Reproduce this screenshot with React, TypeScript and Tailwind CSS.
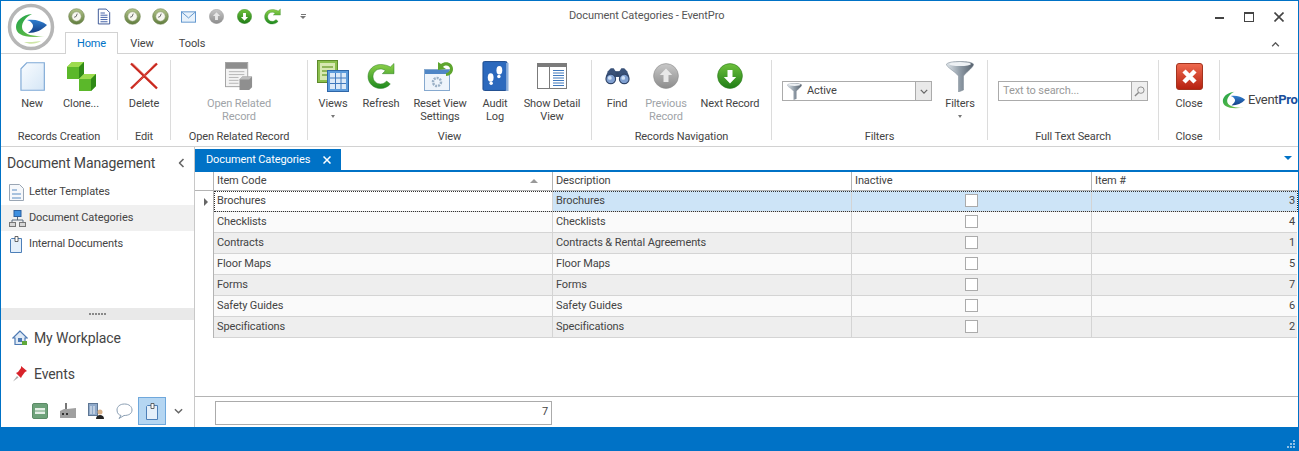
import type { ReactNode } from "react";

const Clock = () => (
  <svg viewBox="0 0 18 18" className="h-[17px] w-[17px]">
    <defs>
      <linearGradient id="clockRing" x1="0" y1="0" x2="0" y2="1">
        <stop offset="0" stopColor="#b4c58c" />
        <stop offset="1" stopColor="#5f7c3c" />
      </linearGradient>
    </defs>
    <circle cx="9" cy="9" r="8.300" fill="url(#clockRing)" stroke="#6d8250" strokeWidth=".6" />
    <circle cx="9" cy="9" r="5" fill="#f7f7f0" stroke="#8d9c72" strokeWidth=".6" />
    <path d="M9.800 6 8.600 9 6.500 9.800" fill="none" stroke="#555" strokeWidth=".9" />
  </svg>
);

const Sheet = () => (
  <svg viewBox="0 0 16 18" className="h-[17px] w-[14px]">
    <path d="M1.500.5h9l4 4v13h-13z" fill="#fff" stroke="#27468c" />
    <path d="M4 5h5M4 7.500h8M4 10h8M4 12.500h8M4 15h8" stroke="#2d4f9e" />
  </svg>
);

const Mail = () => (
  <svg viewBox="0 0 16 12" className="h-[12px] w-[15px]">
    <rect x=".5" y=".5" width="15" height="11" fill="#e8f2fb" stroke="#5c93cc" />
    <path d="M.5.5 8 7l7.500-6.500" fill="none" stroke="#5c93cc" />
  </svg>
);

const RoundArrow = ({ size, up, gray }: { size: number; up?: boolean; gray?: boolean }) => (
  <svg viewBox="0 0 26 26" style={{ width: size, height: size }}>
    <defs>
      <linearGradient id="greenBall" x1="0" y1="0" x2="0" y2="1">
        <stop offset="0" stopColor="#6ec13c" />
        <stop offset="1" stopColor="#1f7d16" />
      </linearGradient>
      <linearGradient id="grayBall" x1="0" y1="0" x2="0" y2="1">
        <stop offset="0" stopColor="#c8c8c8" />
        <stop offset="1" stopColor="#8c8c8c" />
      </linearGradient>
    </defs>
    <circle cx="13" cy="13" r="12.400" fill={gray ? "url(#grayBall)" : "url(#greenBall)"} stroke={gray ? "#8b8b8b" : "#2a7a1d"} strokeWidth=".6" />
    <path d={up ? "M13 5.500 6.800 12h3.700v7h5v-7h3.700z" : "M13 20.500 6.800 14h3.700V7h5v7h3.700z"} fill={gray ? "#e8e8e8" : "#fff"} />
  </svg>
);

const RefreshArrow = ({ size }: { size: number }) => (
  <svg viewBox="0 0 28 28" style={{ width: size, height: size }}>
    <defs>
      <linearGradient id="refreshGreen" x1="0" y1="0" x2="0" y2="1">
        <stop offset="0" stopColor="#8ed14a" />
        <stop offset="1" stopColor="#1d8a1e" />
      </linearGradient>
    </defs>
    <path
      d="M13.500 2.500C6.500 2.500 1 7.800 1 14.500S6.500 26.500 13.500 26.500c4 0 7.500-1.700 9.800-4.500l-3.700-3c-1.500 1.900-3.500 3-6.100 3-4.200 0-7.500-3.300-7.500-7.500s3.300-7.500 7.500-7.500c2 0 3.500.6 4.800 1.700l-3 3H27V1.500l-3.700 3.500C20.800 3.400 17.300 2.500 13.500 2.500z"
      fill="url(#refreshGreen)"
      stroke="#2b7d22"
      strokeWidth=".5"
    />
  </svg>
);

const NewPage = () => (
  <svg viewBox="0 0 26 30" className="h-[29px] w-[25px]">
    <defs>
      <linearGradient id="pageBlue" x1="0" y1="0" x2="1" y2="1">
        <stop offset="0" stopColor="#f9fcff" />
        <stop offset="1" stopColor="#d5e6f6" />
      </linearGradient>
    </defs>
    <path d="M7 .7h18.300v28.600H1V7z" fill="url(#pageBlue)" stroke="#7fa9d6" strokeWidth="1.200" />
  </svg>
);

const Cube = ({ x, y }: { x: number; y: number }) => (
  <g transform={`translate(${x} ${y})`}>
    <path d="M0 5 5 0h12v12l-5 5H0z" fill="#5bb82a" />
    <path d="M0 5 5 0h12l-5 5z" fill="#9ddb4e" />
    <path d="M12 5l5-5v12l-5 5z" fill="#2f8a16" />
  </g>
);

const Clone = () => (
  <svg viewBox="0 0 29 29" className="h-[29px] w-[29px]">
    <Cube x={0} y={0} />
    <Cube x={12} y={12} />
  </svg>
);

const RedX = () => (
  <svg viewBox="0 0 28 28" className="h-[28px] w-[28px]">
    <path d="M1 1.500 27 26.500M27 1.500 1 26.500" stroke="#c8281e" strokeWidth="2.400" />
    <path d="M3 1.500 27 25M25 1.500 3 26" stroke="#e9685e" strokeWidth=".6" />
  </svg>
);

const RelatedRecord = () => (
  <svg viewBox="0 0 30 30" className="h-[29px] w-[29px]">
    <rect x=".5" y=".5" width="23" height="25" fill="#f3f3f3" stroke="#a3a3a3" />
    <rect x="1" y="1" width="22" height="6" fill="#8e8e8e" />
    <path d="M4 10h16M4 13h16M4 16h10M4 19h10M4 22h10" stroke="#b5b5b5" />
    <path d="M15 18l3-3h10v11l-3 3H15z" fill="#8f8f8f" />
    <path d="M15 18l3-3h10l-3 3z" fill="#bdbdbd" />
  </svg>
);

const ViewsIcon = () => (
  <svg viewBox="0 0 32 32" className="h-[32px] w-[32px]">
    <rect x=".5" y=".5" width="20" height="22" fill="#8bbf4d" stroke="#5d8a2b" />
    <rect x="3" y="3" width="15" height="17" fill="#d7e8b2" />
    <path d="M5 7h11M5 11h11M5 15h8" stroke="#7aa53f" strokeWidth="1.500" />
    <rect x="10.500" y="10.500" width="21" height="21" fill="#5b9bdc" stroke="#2e66a8" />
    <rect x="13" y="13" width="16" height="16" fill="#dbe9f8" />
    <path d="M13 18h16M13 23.500h16M18.500 13v16M24 13v16" stroke="#3f78bd" />
  </svg>
);

const ResetView = () => (
  <svg viewBox="0 0 32 32" className="h-[32px] w-[32px]">
    <rect x=".5" y="9.500" width="25" height="21" fill="#eef4fb" stroke="#86a9cf" />
    <rect x="1" y="10" width="24" height="4" fill="#4f86c6" />
    <circle cx="13" cy="22" r="4" fill="none" stroke="#9ab0c6" strokeWidth="2.500" strokeDasharray="2 1" />
    <path d="M17 4c5-4 12-1 12 5 0 4-3 7-7 7v-3c2 0 4-2 4-4 0-3-4-5-7-2l3 2-8 1V2z" fill="#5da52e" />
  </svg>
);

const AuditLog = () => (
  <svg viewBox="0 0 28 32" className="h-[31px] w-[27px]">
    <rect x="1" y=".5" width="25" height="30" rx="1.500" fill="#2c69bd" stroke="#1c4a8c" />
    <rect x="25" y="2" width="2.500" height="29" fill="#8fb0dc" />
    <ellipse cx="9" cy="17" rx="3" ry="4.500" fill="#fff" />
    <circle cx="9.500" cy="23" r="1.800" fill="#fff" />
    <ellipse cx="18" cy="9.500" rx="3" ry="4.500" fill="#fff" />
    <circle cx="17.500" cy="16" r="1.800" fill="#fff" />
  </svg>
);

const DetailView = () => (
  <svg viewBox="0 0 30 26" className="h-[26px] w-[30px]">
    <rect x=".5" y=".5" width="29" height="25" fill="#fff" stroke="#7b7b7b" />
    <rect x="0" y="0" width="30" height="4" fill="#7b7b7b" />
    <path d="M12.500 4v21" stroke="#7b7b7b" />
    <path d="M16 7.500h11M16 10h11M16 12.500h11M16 15h11M16 17.500h11M16 20h11M16 22.500h11" stroke="#3f78bd" />
  </svg>
);

const Binoculars = () => (
  <svg viewBox="0 0 26 18" className="h-[18px] w-[25px]">
    <rect x="10" y="4" width="6" height="6" fill="#334a6e" />
    <path d="M3 4 6 1h3l2 3v9H1V9z" fill="#3a5279" />
    <path d="M23 4l-3-3h-3l-2 3v9h10V9z" fill="#3a5279" />
    <circle cx="6" cy="12" r="5" fill="#7f9fd0" stroke="#2f4468" strokeWidth="1.200" />
    <circle cx="20" cy="12" r="5" fill="#7f9fd0" stroke="#2f4468" strokeWidth="1.200" />
    <circle cx="5" cy="11" r="2" fill="#cfe0f5" />
    <circle cx="19" cy="11" r="2" fill="#cfe0f5" />
  </svg>
);

const Funnel = ({ w, h }: { w: number; h: number }) => (
  <svg viewBox="0 0 28 31" style={{ width: w, height: h }}>
    <defs>
      <linearGradient id="funnelSteel" x1="0" y1="0" x2="1" y2="0">
        <stop offset="0" stopColor="#dfe5ea" />
        <stop offset=".5" stopColor="#8f9ba6" />
        <stop offset="1" stopColor="#56616d" />
      </linearGradient>
    </defs>
    <path d="M.5 3C3-.5 25-.5 27.500 3c.5 3-6 7-10 12v14l-5 2V15C8.500 10 0 6 .5 3z" fill="url(#funnelSteel)" stroke="#7b8792" strokeWidth=".5" />
    <ellipse cx="14" cy="3" rx="11" ry="2" fill="#eef1f4" />
  </svg>
);

const CloseBox = () => (
  <svg viewBox="0 0 27 27" className="h-[27px] w-[27px]">
    <defs>
      <linearGradient id="closeRed" x1="0" y1="0" x2="0" y2="1">
        <stop offset="0" stopColor="#ef6a4f" />
        <stop offset="1" stopColor="#b5200f" />
      </linearGradient>
    </defs>
    <rect x=".5" y=".5" width="26" height="26" rx="2.500" fill="url(#closeRed)" stroke="#a3341f" />
    <path d="M8 8l11 11M19 8 8 19" stroke="#fff" strokeWidth="4.500" />
  </svg>
);

const Swoosh = () => (
  <>
    <defs>
      <linearGradient id="swooshGreen" x1="0" y1="0" x2="1" y2="1">
        <stop offset="0" stopColor="#1fa24a" />
        <stop offset=".7" stopColor="#5cb947" />
        <stop offset="1" stopColor="#a9d67c" />
      </linearGradient>
      <linearGradient id="swooshBlue" x1="0" y1="0" x2="0" y2="1">
        <stop offset="0" stopColor="#2f7fd0" />
        <stop offset="1" stopColor="#143f86" />
      </linearGradient>
    </defs>
    <path d="M30 14C20 15 14 21 14 27c0 8 10 12 29 9-12 1-23-2-23-9 0-5 4-10 10-13z" fill="url(#swooshGreen)" />
    <path d="M25 20c8-1 15 1 20 5-5 5-11 8-19 8 3-2 5-5 5-7s-2-5-6-6z" fill="url(#swooshBlue)" />
  </>
);

const ChevronDown = ({ className }: { className?: string }) => (
  <svg viewBox="0 0 10 6" className={className}>
    <path d="M1 1l4 4 4-4" fill="none" stroke="currentColor" strokeWidth="1.600" />
  </svg>
);

const DocIcon = () => (
  <svg viewBox="0 0 14 17" className="h-[17px] w-[14px]">
    <path d="M2.500 2.500h10v14h-11V3.500z" fill="#e4effa" stroke="#4d7fb8" />
    <path d="M6 .5h3v5H6z" fill="#fff" stroke="#444" strokeWidth=".8" />
  </svg>
);

const LetterIcon = () => (
  <svg viewBox="0 0 15 17" className="h-[17px] w-[15px]">
    <path d="M.5.5h10l4 4v12H.5z" fill="#f6f8fb" stroke="#9aa6b4" />
    <path d="M3 5h5v2H3zM3 9h9v2H3zM3 13h9v2H3z" fill="#a8c2de" />
  </svg>
);

const NetworkIcon = () => (
  <svg viewBox="0 0 17 17" className="h-[17px] w-[17px]">
    <rect x="5" y=".5" width="7" height="6" fill="#3d8fe0" stroke="#2b5f9e" />
    <path d="M8.500 7v3M3 13v-3h11v3" fill="none" stroke="#5b6b7d" />
    <rect x=".5" y="12.500" width="6" height="4" fill="#d6d6d6" stroke="#777" />
    <rect x="10.500" y="12.500" width="6" height="4" fill="#d6d6d6" stroke="#777" />
  </svg>
);

const HouseIcon = () => (
  <svg viewBox="0 0 16 16" className="h-[16px] w-[16px]">
    <path d="M8 1 .8 8h2.200v6.500h10V8h2.200z" fill="#dfeaf6" stroke="#4d79b3" strokeWidth="1.200" />
    <rect x="6" y="8" width="4" height="4" fill="#4d79b3" />
    <rect x="10" y="11" width="5" height="4" fill="#5fa83a" />
  </svg>
);

const PinIcon = () => (
  <svg viewBox="0 0 14 16" className="h-[16px] w-[14px]">
    <path d="M8 0l6 5-2 1-3 4-1 2L3 7l2-1 3-4z" fill="#d8232a" />
    <path d="M4 10 0 15.500l5.500-4z" fill="#aaa" />
  </svg>
);

const SmallBedIcon = () => (
  <svg viewBox="0 0 16 16" className="h-[16px] w-[16px]">
    <rect x=".5" y=".5" width="15" height="15" rx="1.500" fill="#6ea27a" stroke="#5b8b66" />
    <rect x="3" y="5" width="10" height="6" fill="#e4efe6" />
    <path d="M3 8h10" stroke="#6ea27a" />
  </svg>
);

const FactoryIcon = () => (
  <svg viewBox="0 0 16 16" className="h-[16px] w-[16px]">
    <rect x="5" y="0" width="2" height="6" fill="#777" />
    <path d="M0 8l4-2h3l9-1v10H0z" fill="#a0a0a0" />
    <path d="M2 10h2v2H2zM6 10h2v2H6z" fill="#333" />
  </svg>
);

const BuildingPersonIcon = () => (
  <svg viewBox="0 0 16 16" className="h-[16px] w-[16px]">
    <rect x=".5" y=".5" width="9" height="12" fill="#8fa9c9" stroke="#5d7694" />
    <path d="M3 3v8M6 3v8" stroke="#eef3f9" />
    <circle cx="12" cy="9" r="2.500" fill="#d8b18a" />
    <path d="M8 16c0-3 2-4 4-4s4 1 4 4z" fill="#222" />
  </svg>
);

const ChatIcon = () => (
  <svg viewBox="0 0 17 16" className="h-[16px] w-[17px]">
    <path d="M8.500 1C4 1 1 3.500 1 7s2 5 4 5.500L3 15.500l5-3c5 0 8-2 8-5.500S13 1 8.500 1z" fill="#fff" stroke="#8a9eb3" />
  </svg>
);

const RibbonButton = ({
  icon,
  label,
  w,
  muted,
  caret,
}: {
  icon: ReactNode;
  label: string[];
  w: string;
  muted?: boolean;
  caret?: boolean;
}) => (
  <div className={`flex shrink-0 flex-col items-center ${w}`}>
    <div className="flex h-[32px] shrink-0 items-center justify-center">{icon}</div>
    <div className={`mt-[5px] flex flex-col items-center leading-[13px] whitespace-nowrap ${muted ? "text-[#a0a4a8]" : "text-[#444]"}`}>
      {label.map((line) => (
        <span key={line}>{line}</span>
      ))}
      {caret && <span className="mt-[5px] h-0 w-0 border-x-[2.5px] border-t-[3px] border-x-transparent border-t-[#777]" />}
    </div>
  </div>
);

const RibbonGroup = ({
  title,
  w,
  className = "",
  children,
}: {
  title: string;
  w: string;
  className?: string;
  children: ReactNode;
}) => (
  <div className={`flex h-[80px] shrink-0 flex-col border-r border-[#dcdcdc] ${w}`}>
    <div className={`flex h-[66px] shrink-0 ${className}`}>{children}</div>
    <div className="mt-auto -mb-[4px] text-center leading-[14px] whitespace-nowrap text-[#444]">{title}</div>
  </div>
);

const rows = [
  { code: "Brochures", desc: "Brochures", num: 3 },
  { code: "Checklists", desc: "Checklists", num: 4 },
  { code: "Contracts", desc: "Contracts & Rental Agreements", num: 1 },
  { code: "Floor Maps", desc: "Floor Maps", num: 5 },
  { code: "Forms", desc: "Forms", num: 7 },
  { code: "Safety Guides", desc: "Safety Guides", num: 6 },
  { code: "Specifications", desc: "Specifications", num: 2 },
];

const gridCols = "grid grid-cols-[19px_339px_299px_240px_205px]";

export default function App() {
  return (
    <div className="flex h-[451px] w-[1299px] flex-col overflow-hidden border-x border-t border-[#0072c6] bg-white font-['Roboto','Noto_Sans',sans-serif] text-[11px] tracking-[-0.1px] text-[#444]">
      <div className="relative h-[53px] shrink-0 border-b border-[#d2d2d2]">
        <svg viewBox="0 0 60 54" className="absolute left-[1px] top-[-1px] h-[54px] w-[60px]">
          <circle cx="29" cy="27" r="21.500" fill="#fff" stroke="#b6b6b6" strokeWidth="3.500" />
          <Swoosh />
          <path d="M22 42c6 3 12 2 17-1-6 1-12 1-17 1z" fill="#cfe6a8" />
        </svg>
        <div className="flex h-[31px] items-center">
          <div className="ml-[61px] flex items-center">
            {[<Clock />, <Sheet />, <Clock />, <Clock />, <Mail />, <RoundArrow size={15} up gray />, <RoundArrow size={15} />, <RefreshArrow size={17} />].map((icon, i) => (
              <div key={i} className="flex w-[28px] justify-center">
                {icon}
              </div>
            ))}
            <div className="ml-[14px] flex flex-col items-center gap-[1px]">
              <span className="h-px w-[5px] bg-[#777]" />
              <span className="h-0 w-0 border-x-[3px] border-t-[3px] border-x-transparent border-t-[#777]" />
            </div>
          </div>
          <div className="ml-[263px] text-[#555]">Document Categories - EventPro</div>
          <div className="ml-auto mr-[14px] flex items-center gap-[20px]">
            <span className="mt-[3px] h-[2px] w-[9px] bg-[#444]" />
            <span className="h-[10px] w-[10px] border border-t-2 border-[#444]" />
            <svg viewBox="0 0 10 10" className="h-[10px] w-[10px] text-[#444]">
              <path d="M.5.5l9 9M9.500.5l-9 9" stroke="currentColor" strokeWidth="1.600" />
            </svg>
          </div>
        </div>
        <div className="flex h-[22px] items-end pl-[64px]">
          <div className="z-10 flex h-[22px] w-[53px] items-center justify-center border-x border-t border-[#d2d2d2] bg-white pt-[2px] text-[#0072c6]">Home</div>
          <div className="flex h-[22px] w-[48px] items-center justify-center pt-[2px]">View</div>
          <div className="flex h-[22px] w-[52px] items-center justify-center pt-[2px]">Tools</div>
          <ChevronDown className="mb-[7px] ml-auto mr-[18px] h-[5px] w-[9px] rotate-180 text-[#555]" />
        </div>
      </div>

      <div className="flex h-[93px] shrink-0 items-start border-b border-[#d2d2d2] pt-[6px]">
        <RibbonGroup title="Records Creation" w="w-[117px]" className="pl-[7px]">
          <RibbonButton icon={<NewPage />} label={["New"]} w="w-[48px]" />
          <RibbonButton icon={<Clone />} label={["Clone..."]} w="w-[50px]" />
        </RibbonGroup>
        <RibbonGroup title="Edit" w="w-[53px]" className="justify-center">
          <RibbonButton icon={<RedX />} label={["Delete"]} w="w-[44px]" />
        </RibbonGroup>
        <RibbonGroup title="Open Related Record" w="w-[137px]" className="justify-center">
          <RibbonButton icon={<RelatedRecord />} label={["Open Related", "Record"]} w="w-[90px]" muted />
        </RibbonGroup>
        <RibbonGroup title="View" w="w-[284px]" className="pl-[1px]">
          <RibbonButton icon={<ViewsIcon />} label={["Views"]} w="w-[48px]" caret />
          <RibbonButton icon={<RefreshArrow size={28} />} label={["Refresh"]} w="w-[48px]" />
          <RibbonButton icon={<ResetView />} label={["Reset View", "Settings"]} w="w-[70px]" />
          <RibbonButton icon={<AuditLog />} label={["Audit", "Log"]} w="w-[40px]" />
          <RibbonButton icon={<DetailView />} label={["Show Detail", "View"]} w="w-[74px]" />
        </RibbonGroup>
        <RibbonGroup title="Records Navigation" w="w-[180px]">
          <RibbonButton icon={<Binoculars />} label={["Find"]} w="w-[50px]" />
          <RibbonButton icon={<RoundArrow size={26} up gray />} label={["Previous", "Record"]} w="w-[48px]" muted />
          <RibbonButton icon={<RoundArrow size={26} />} label={["Next Record"]} w="w-[80px]" />
        </RibbonGroup>
        <RibbonGroup title="Filters" w="w-[216px]" className="pl-[10px]">
          <div className="mt-[21px] flex h-[20px] w-[150px] shrink-0 items-center border border-[#ababab]">
            <div className="ml-[4px]">
              <Funnel w={15} h={17} />
            </div>
            <span className="ml-[5px] flex-1 pt-[1px]">Active</span>
            <div className="flex h-full w-[16px] items-center justify-center border-l border-[#ababab] bg-[#e9e9e9]">
              <ChevronDown className="h-[5px] w-[8px] text-[#666]" />
            </div>
          </div>
          <RibbonButton icon={<Funnel w={28} h={31} />} label={["Filters"]} w="ml-[8px] w-[40px]" caret />
        </RibbonGroup>
        <RibbonGroup title="Full Text Search" w="w-[171px]" className="pl-[10px]">
          <div className="mt-[21px] flex h-[20px] w-[150px] items-center border border-[#ababab]">
            <span className="ml-[4px] flex-1 pt-[1px] text-[#9a9a9a]">Text to search...</span>
            <div className="flex h-full w-[16px] items-center justify-center border-l border-[#ababab] bg-[#efefef]">
              <svg viewBox="0 0 12 12" className="h-[11px] w-[11px]">
                <circle cx="7.500" cy="4.500" r="3.500" fill="none" stroke="#888" />
                <path d="M5 7l-4 4" stroke="#888" strokeWidth="1.500" />
              </svg>
            </div>
          </div>
        </RibbonGroup>
        <RibbonGroup title="Close" w="w-[61px]" className="justify-center">
          <RibbonButton icon={<CloseBox />} label={["Close"]} w="w-[44px]" />
        </RibbonGroup>
        <div className="ml-[2px] mt-[30px] flex items-center">
          <svg viewBox="13 13 33 25" className="h-[18px] w-[24px]">
            <Swoosh />
          </svg>
          <span className="ml-[2px] text-[13px] tracking-[-0.3px] text-[#444]">
            Event<span className="font-bold text-[#1a4f9c]">Pro</span>
          </span>
        </div>
      </div>

      <div className="flex min-h-0 flex-1">
        <div className="flex w-[194px] shrink-0 flex-col border-r border-[#c8c8c8]">
          <div className="flex h-[32px] shrink-0 items-center justify-between pl-[6px] pr-[7px]">
            <span className="text-[14px] text-[#444]">Document Management</span>
            <ChevronDown className="h-[6px] w-[11px] rotate-90 text-[#666]" />
          </div>
          {[
            { icon: <LetterIcon />, label: "Letter Templates" },
            { icon: <NetworkIcon />, label: "Document Categories", active: true },
            { icon: <DocIcon />, label: "Internal Documents" },
          ].map((item) => (
            <div key={item.label} className={`flex h-[26px] shrink-0 items-center pl-[8px] ${item.active ? "bg-[#f0f0f0]" : ""}`}>
              <div className="flex w-[20px] justify-start">{item.icon}</div>
              <span className="pt-[1px]">{item.label}</span>
            </div>
          ))}
          <div className="mt-auto flex h-[12px] shrink-0 items-center justify-center gap-[1px] bg-[#e9e9e9]">
            {[0, 1, 2, 3, 4, 5].map((d) => (
              <span key={d} className="h-[2px] w-[2px] bg-[#888]" />
            ))}
          </div>
          <div className="flex h-[36px] shrink-0 items-center pl-[11px] text-[14px]">
            <HouseIcon />
            <span className="ml-[6px] pt-[1px]">My Workplace</span>
          </div>
          <div className="flex h-[36px] shrink-0 items-center pl-[12px] text-[14px]">
            <PinIcon />
            <span className="ml-[7px] pt-[1px]">Events</span>
          </div>
          <div className="flex h-[35px] shrink-0 items-end justify-end pb-[2px] pr-[11px]">
            <div className="flex h-[28px] w-[28px] items-center justify-center"><SmallBedIcon /></div>
            <div className="flex h-[28px] w-[28px] items-center justify-center"><FactoryIcon /></div>
            <div className="flex h-[28px] w-[28px] items-center justify-center"><BuildingPersonIcon /></div>
            <div className="flex h-[28px] w-[28px] items-center justify-center"><ChatIcon /></div>
            <div className="flex h-[28px] w-[28px] items-center justify-center border border-[#6fa8dc] bg-[#b5d6f2]"><DocIcon /></div>
            <ChevronDown className="mb-[11px] ml-[8px] h-[6px] w-[9px] text-[#666]" />
          </div>
        </div>

        <div className="flex min-w-0 flex-1 flex-col">
          <div className="relative flex h-[25px] shrink-0 items-end border-b-2 border-[#0072c6] pt-[2px]">
            <div className="flex h-[21px] w-[146px] items-center bg-[#0072c6] pl-[11px] pt-[1px] whitespace-nowrap text-white">
              Document Categories
              <svg viewBox="0 0 8 8" className="ml-[13px] h-[8px] w-[8px]">
                <path d="M.5.5l7 7M7.500.5l-7 7" stroke="#fff" strokeWidth="1.500" />
              </svg>
            </div>
            <span className="absolute right-[6px] top-[9px] h-0 w-0 border-x-[4px] border-t-[4px] border-x-transparent border-t-[#0072c6]" />
          </div>

          <div className={`${gridCols} h-[19px] shrink-0 border-b border-[#b4b4b4]`}>
            <div className="border-r border-[#b4b4b4]" />
            <div className="relative flex items-center border-r border-[#b4b4b4] pl-[3px] pt-[1px]">
              Item Code
              <span className="absolute right-[14px] top-[7px] h-0 w-0 border-x-[4px] border-b-[4px] border-x-transparent border-b-[#999]" />
            </div>
            <div className="flex items-center border-r border-[#b4b4b4] pl-[3px] pt-[1px]">Description</div>
            <div className="flex items-center border-r border-[#b4b4b4] pl-[3px] pt-[1px]">Inactive</div>
            <div className="flex items-center pl-[3px] pt-[1px]">Item #</div>
          </div>

          <div className="min-h-0 flex-1">
            {rows.map((row, i) => {
              const selected = i === 0;
              const bg = selected ? "bg-[#cde4f7]" : i % 2 === 1 ? "bg-[#fafafa]" : "bg-[#eeeeee]";
              const cell = `flex items-center border-b border-r border-[#d4d4d4] ${bg}`;
              return (
                <div key={row.code} className={`${gridCols} relative h-[21px]`}>
                  <div className="flex items-center justify-center border-r border-[#b4b4b4] bg-white">
                    {selected && <span className="ml-[3px] h-0 w-0 border-y-[4px] border-l-[4px] border-y-transparent border-l-[#666]" />}
                  </div>
                  <div className={`${cell} pl-[3px] pt-[1px] ${selected ? "!bg-white" : ""}`}>{row.code}</div>
                  <div className={`${cell} pl-[3px] pt-[1px]`}>{row.desc}</div>
                  <div className={`${cell} justify-center`}>
                    <span className="-mt-[1px] h-[13px] w-[13px] border border-[#ababab] bg-white" />
                  </div>
                  <div className={`${cell} justify-end border-r-0 pr-[2px] pt-[1px]`}>{row.num}</div>
                  {selected && <div className="pointer-events-none absolute inset-y-0 left-[19px] right-0 border border-dotted border-[#333]" />}
                </div>
              );
            })}
          </div>

          <div className="flex h-[31px] shrink-0 items-center border-t border-[#b4b4b4] pl-[20px] pt-[1px]">
            <div className="flex h-[24px] w-[337px] items-center justify-end border border-[#ababab] pr-[3px]">7</div>
          </div>
        </div>
      </div>

      <div className="relative h-[24px] shrink-0 bg-[#0072c6]">
        <div className="absolute bottom-[3px] right-[3px] grid grid-cols-3 gap-[1px]">
          {[0, 1, 2, 3, 4, 5, 6, 7, 8].map((d) => (
            <span key={d} className={`h-[2px] w-[2px] ${d === 0 || d === 1 || d === 3 ? "bg-transparent" : "bg-[#8fc0e6]"}`} />
          ))}
        </div>
      </div>
    </div>
  );
}
